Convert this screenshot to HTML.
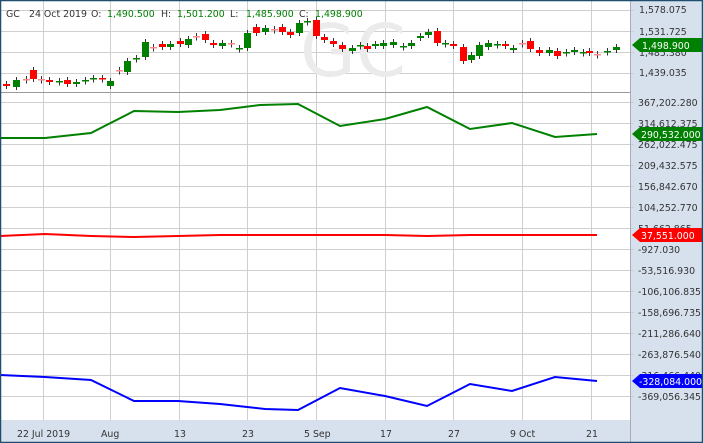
<!DOCTYPE html><html><head><style>body{margin:0;width:704px;height:443px;overflow:hidden;background:#fff}svg{display:block}text{font-family:"DejaVu Sans","Liberation Sans",sans-serif;font-size:9.4px}</style></head><body>
<svg width="704" height="443" viewBox="0 0 704 443">
<rect x="0" y="0" width="704" height="443" fill="#fff"/>
<rect x="630" y="0" width="72" height="443" fill="#d7e1ee"/>
<rect x="0" y="420" width="702" height="23" fill="#d7e1ee"/>
<g stroke="#cfcfcf" stroke-width="1">
<line x1="43.5" y1="0" x2="43.5" y2="420"/><line x1="110.5" y1="0" x2="110.5" y2="420"/><line x1="179.5" y1="0" x2="179.5" y2="420"/><line x1="247.5" y1="0" x2="247.5" y2="420"/><line x1="316.5" y1="0" x2="316.5" y2="420"/><line x1="385.5" y1="0" x2="385.5" y2="420"/><line x1="453.5" y1="0" x2="453.5" y2="420"/><line x1="522.5" y1="0" x2="522.5" y2="420"/><line x1="591.5" y1="0" x2="591.5" y2="420"/>
<line x1="0" y1="10.5" x2="634" y2="10.5"/><line x1="0" y1="31.5" x2="634" y2="31.5"/><line x1="0" y1="52.5" x2="634" y2="52.5"/><line x1="0" y1="73.5" x2="634" y2="73.5"/>
<line x1="0" y1="102.5" x2="634" y2="102.5"/><line x1="0" y1="123.5" x2="634" y2="123.5"/><line x1="0" y1="144.5" x2="634" y2="144.5"/><line x1="0" y1="165.5" x2="634" y2="165.5"/><line x1="0" y1="186.5" x2="634" y2="186.5"/><line x1="0" y1="207.5" x2="634" y2="207.5"/><line x1="0" y1="228.5" x2="634" y2="228.5"/><line x1="0" y1="249.5" x2="634" y2="249.5"/><line x1="0" y1="270.5" x2="634" y2="270.5"/><line x1="0" y1="291.5" x2="634" y2="291.5"/><line x1="0" y1="312.5" x2="634" y2="312.5"/><line x1="0" y1="333.5" x2="634" y2="333.5"/><line x1="0" y1="354.5" x2="634" y2="354.5"/><line x1="0" y1="375.5" x2="634" y2="375.5"/><line x1="0" y1="396.5" x2="634" y2="396.5"/>
</g>
<line x1="0" y1="92.5" x2="630" y2="92.5" stroke="#999"/>
<line x1="630.5" y1="0" x2="630.5" y2="443" stroke="#aab"/>
<text x="300" y="76" fill="#ebebeb" style="font-size:72px">GC</text>
<g id="c"></g>
<polyline fill="none" stroke="#008000" stroke-width="2" points="0,138 45,138 91,133 134,111 178,112 220,110 260,105 298,104 340,126 385,119 427,107 470,129 512,123 555,137 597,134"/>
<polyline fill="none" stroke="#f00" stroke-width="2" points="0,236 45,234 91,236 134,237 178,236 220,235 298,235 385,235 427,236 470,235 597,235"/>
<polyline fill="none" stroke="#00f" stroke-width="2" points="0,375 45,377 91,380 134,401 178,401 220,404 265,409 298,410 340,388 385,396 427,406 470,384 512,391 555,377 597,381"/>
<g fill="#333"><text x="6" y="17">GC</text><text x="29" y="17">24 Oct 2019</text><text x="91" y="17">O:</text><text x="161" y="17">H:</text><text x="230" y="17">L:</text><text x="299" y="17">C:</text></g>
<g fill="#008000"><text x="107" y="17">1,490.500</text><text x="177" y="17">1,501.200</text><text x="246" y="17">1,485.900</text><text x="315" y="17">1,498.900</text></g>
<g fill="#333">
<text x="639" y="13">1,578.075</text><text x="639" y="35">1,531.725</text><text x="639" y="56">1,485.380</text><text x="639" y="76">1,439.035</text>
<text x="638" y="106">367,202.280</text><text x="638" y="127">314,612.375</text><text x="638" y="148">262,022.475</text><text x="638" y="169">209,432.575</text><text x="638" y="190">156,842.670</text><text x="638" y="211">104,252.770</text><text x="638" y="232">51,662.865</text><text x="638" y="253">-927.030</text><text x="638" y="274">-53,516.930</text><text x="638" y="295">-106,106.835</text><text x="638" y="316">-158,696.735</text><text x="638" y="337">-211,286.640</text><text x="638" y="358">-263,876.540</text><text x="638" y="379">-316,466.440</text><text x="638" y="400">-369,056.345</text>
<text x="17" y="437">22 Jul 2019</text><text x="101" y="437">Aug</text><text x="174" y="437">13</text><text x="242" y="437">23</text><text x="304" y="437">5 Sep</text><text x="380" y="437">17</text><text x="448" y="437">27</text><text x="510" y="437">9 Oct</text><text x="586" y="437">21</text>
</g>
<path d="M632,45 L640,38 L702,38 L702,52 L640,52 Z" fill="#008000"/><text x="642" y="49" fill="#fff">1,498.900</text>
<path d="M632,134 L640,127 L702,127 L702,141 L640,141 Z" fill="#008000"/><text x="641" y="138" fill="#fff">290,532.000</text>
<path d="M632,235 L640,228 L702,228 L702,242 L640,242 Z" fill="#f00"/><text x="641" y="239" fill="#fff">37,551.000</text>
<path d="M632,381 L640,374 L702,374 L702,388 L640,388 Z" fill="#00f"/><text x="639" y="385" fill="#fff">-328,084.000</text>
<rect x="0.5" y="0.5" width="702" height="442" fill="none" stroke="#1f4e6e" stroke-width="1.5"/>
</svg>
<script>
var d=[[6,84,86,'r'],[16,80,87,'g'],[26,79,79,'p'],[33,70,79,'r'],[41,79,79,'p'],[49,80,82,'r'],[59,81,82,'g'],[67,80,84,'r'],[76,82,84,'g'],[85,80,81,'g'],[93,78,79,'g'],[102,78,79,'r'],[110,81,86,'g'],[119,70,70,'p'],[127,61,72,'g'],[136,58,59,'g'],[145,42,57,'g'],[153,47,47,'p'],[162,44,47,'r'],[170,44,47,'g'],[180,41,44,'r'],[188,39,45,'g'],[196,36,36,'p'],[205,34,40,'r'],[213,43,45,'r'],[222,43,46,'g'],[231,43,43,'p'],[239,48,48,'g'],[247,33,48,'g'],[256,27,33,'r'],[265,28,32,'g'],[274,29,29,'p'],[282,27,32,'r'],[290,32,35,'r'],[299,23,33,'g'],[307,21,22,'g'],[316,20,36,'r'],[324,37,40,'r'],[333,41,44,'r'],[342,45,49,'r'],[352,48,51,'g'],[360,45,46,'g'],[367,46,49,'r'],[375,44,46,'g'],[383,43,46,'g'],[393,42,45,'g'],[403,46,47,'g'],[411,43,46,'g'],[420,36,38,'g'],[428,32,35,'g'],[437,31,43,'r'],[445,43,44,'g'],[453,44,46,'r'],[463,47,61,'r'],[471,55,60,'g'],[479,45,56,'g'],[488,43,47,'g'],[497,44,44,'g'],[505,44,46,'r'],[513,48,50,'g'],[522,43,43,'p'],[530,41,49,'r'],[539,50,53,'r'],[549,50,53,'g'],[557,51,56,'r'],[566,52,53,'g'],[574,50,52,'g'],[583,52,52,'g'],[589,51,53,'r'],[597,54,54,'p'],[607,51,52,'g'],[616,47,50,'g']];
var s='',col={r:'#f00',g:'#008000',p:'#f88'};
d.forEach(function(c){var x=c[0],t=c[1],b=Math.max(c[2],c[1]+1.5),f=col[c[3]];s+='<line x1="'+(x+.5)+'" y1="'+(t-3)+'" x2="'+(x+.5)+'" y2="'+(b+3)+'" stroke="#333"/><rect x="'+(x-3)+'" y="'+t+'" width="7" height="'+(b-t)+'" fill="'+f+'"/>';});
document.getElementById('c').innerHTML=s;
</script>
</body></html>
